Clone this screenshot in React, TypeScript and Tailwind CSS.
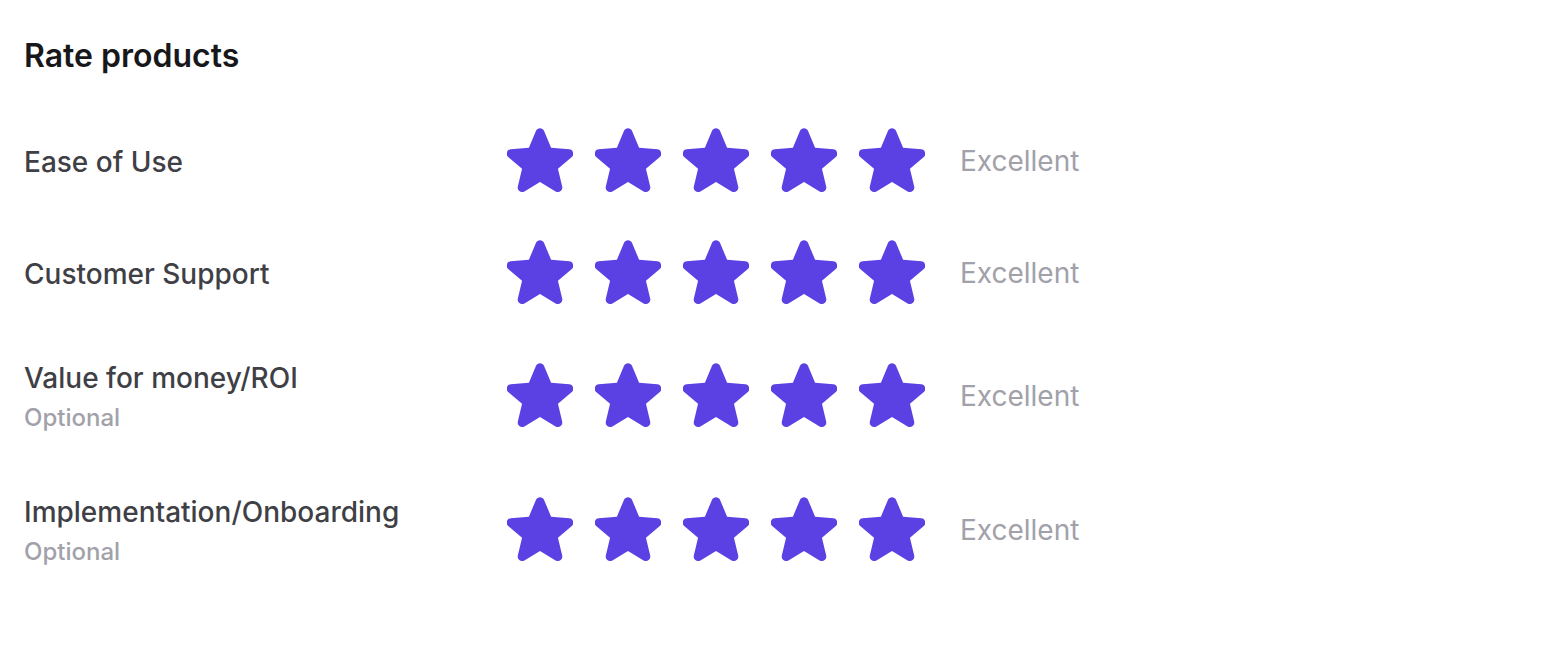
import React from 'react'

interface Criterion {
  label: string
  optional?: boolean
  rating: number
}

const CRITERIA: Criterion[] = [
  { label: 'Ease of Use', rating: 5 },
  { label: 'Customer Support', rating: 5 },
  { label: 'Value for money/ROI', optional: true, rating: 5 },
  { label: 'Implementation/Onboarding', optional: true, rating: 5 },
]

function Star({ filled }: { filled: boolean }) {
  return (
    <svg
      viewBox="2.2 2.4 19.6 19.2"
      className={filled ? 'w-[66px] h-[65px] text-[#5b40e3]' : 'w-[66px] h-[65px] text-[#e4e4e7]'}
      fill="currentColor"
    >
      <path d="M10.788 3.21c.448-1.077 1.976-1.077 2.424 0l2.082 5.006 5.404.434c1.164.093 1.636 1.545.749 2.305l-4.117 3.527 1.257 5.273c.271 1.136-.964 2.033-1.96 1.425L12 18.354 7.373 21.18c-.996.608-2.231-.29-1.96-1.425l1.257-5.273-4.117-3.527c-.887-.76-.415-2.212.749-2.305l5.404-.434 2.082-5.005Z" />
    </svg>
  )
}

export default function App() {
  return (
    <div className="min-h-screen bg-white px-6 pt-[37px]" style={{ fontFamily: 'Inter, sans-serif' }}>
      <h1 className="text-[32px] leading-[38px] font-semibold text-[#18181b]">Rate products</h1>

      <div className="mt-[53px] flex flex-col gap-[47px]">
        {CRITERIA.map(c => (
          <div key={c.label} className={c.optional ? 'flex items-center h-[87px]' : 'flex items-center h-[65px]'}>
            {/* Label */}
            <div className={c.optional ? 'w-[483px] self-start mt-[6px]' : 'w-[483px] pt-[3px]'}>
              <p className="text-[28px] leading-[40px] font-medium text-[#3f3f46]">{c.label}</p>
              {c.optional && (
                <p className="text-[24px] leading-[40px] font-medium text-[#a1a1aa]">Optional</p>
              )}
            </div>

            {/* Stars */}
            <div className="flex gap-[22px]">
              {[1, 2, 3, 4, 5].map(n => (
                <Star key={n} filled={n <= c.rating} />
              ))}
            </div>

            <span className="ml-[35px] text-[28px] leading-[40px] text-[#a1a1aa]">Excellent</span>
          </div>
        ))}
      </div>
    </div>
  )
}
